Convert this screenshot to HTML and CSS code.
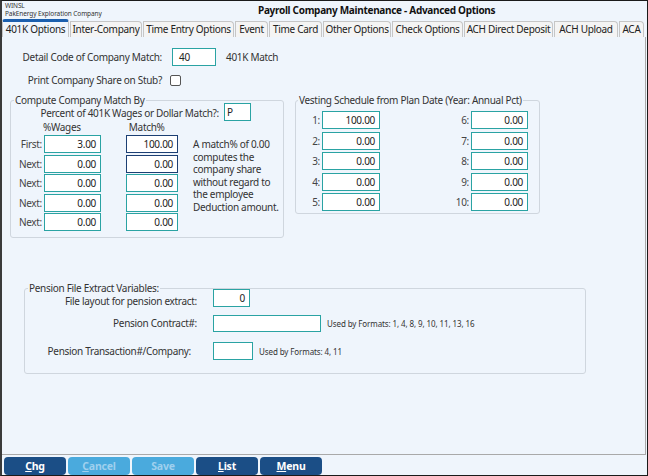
FILE: index.html
```html
<!DOCTYPE html>
<html>
<head>
<meta charset="utf-8">
<link rel="stylesheet" href="styles.css">
</head>
<body>
<div class="window">
  <header class="hdr">
    <div class="co"><div>WINSL</div><div>PakEnergy Exploration Company</div></div>
    <div class="title">Payroll Company Maintenance - Advanced Options</div>
  </header>
  <nav class="tabs">
    <div class="tab active t1">401K Options</div>
    <div class="tab t2">Inter-Company</div>
    <div class="tab t3">Time Entry Options</div>
    <div class="tab t4">Event</div>
    <div class="tab t5">Time Card</div>
    <div class="tab t6">Other Options</div>
    <div class="tab t7">Check Options</div>
    <div class="tab t8">ACH Direct Deposit</div>
    <div class="tab t9">ACH Upload</div>
    <div class="tab t10">ACA</div>
  </nav>
  <main class="content">
    <div class="row r-detail">
      <span class="lbl">Detail Code of Company Match:</span>
      <div class="inp w44 left">40</div>
      <span class="after">401K Match</span>
    </div>
    <div class="row r-print">
      <span class="lbl">Print Company Share on Stub?</span>
      <span class="chk"></span>
    </div>
    <div class="groups">
      <fieldset class="fs match">
        <legend>Compute Company Match By</legend>
        <div class="pct-row">
          <span class="pct-lbl">Percent of 401K Wages or Dollar Match?:</span>
          <div class="inp w27 left">P</div>
        </div>
        <div class="col-heads"><span class="h1">%Wages</span><span class="h2">Match%</span></div>
        <div class="match-grid">
          <span class="rl">First:</span><div class="inp">3.00</div><div class="inp m dark">100.00</div>
          <p class="note">A match% of 0.00<br>computes the<br>company share<br>without regard to<br>the employee<br>Deduction amount.</p>
          <span class="rl">Next:</span><div class="inp">0.00</div><div class="inp m dark">0.00</div>
          <span class="rl">Next:</span><div class="inp">0.00</div><div class="inp m">0.00</div>
          <span class="rl">Next:</span><div class="inp">0.00</div><div class="inp m">0.00</div>
          <span class="rl">Next:</span><div class="inp">0.00</div><div class="inp m">0.00</div>
        </div>
      </fieldset>
      <fieldset class="fs vest">
        <legend>Vesting Schedule from Plan Date (Year: Annual Pct)</legend>
        <div class="vest-grid">
          <span class="vl">1:</span><div class="inp">100.00</div><span class="vl">6:</span><div class="inp">0.00</div>
          <span class="vl">2:</span><div class="inp">0.00</div><span class="vl">7:</span><div class="inp">0.00</div>
          <span class="vl">3:</span><div class="inp">0.00</div><span class="vl">8:</span><div class="inp">0.00</div>
          <span class="vl">4:</span><div class="inp">0.00</div><span class="vl">9:</span><div class="inp">0.00</div>
          <span class="vl">5:</span><div class="inp">0.00</div><span class="vl">10:</span><div class="inp">0.00</div>
        </div>
      </fieldset>
    </div>
    <fieldset class="fs pension">
      <legend>Pension File Extract Variables:</legend>
      <div class="prow p1">
        <span class="plbl">File layout for pension extract:</span>
        <div class="inp w37">0</div>
      </div>
      <div class="prow p2">
        <span class="plbl">Pension Contract#:</span>
        <div class="inp w108"></div>
        <span class="used">Used by Formats: 1, 4, 8, 9, 10, 11, 13, 16</span>
      </div>
      <div class="prow p3">
        <span class="plbl short">Pension Transaction#/Company:</span>
        <div class="inp w40"></div>
        <span class="used">Used by Formats: 4, 11</span>
      </div>
    </fieldset>
  </main>
  <footer class="btns">
    <div class="btn"><u>C</u>hg</div>
    <div class="btn off"><u>C</u>ancel</div>
    <div class="btn off">Save</div>
    <div class="btn"><u>L</u>ist</div>
    <div class="btn"><u>M</u>enu</div>
  </footer>
</div>
</body>
</html>
```
FILE: styles.css
```css
* { box-sizing: border-box; }
html, body { margin: 0; padding: 0; }
body {
  width: 648px;
  height: 476px;
  overflow: hidden;
  font-family: "Noto Sans", "Open Sans", sans-serif;
  font-size: 10px;
  letter-spacing: -0.3px;
  color: #333;
  background: #eff5fc;
}
.window {
  width: 648px;
  height: 476px;
  border: 1px solid #1a1a1a;
  border-left: 2px solid #3a3a3a;
  display: flex;
  flex-direction: column;
  background: #eff5fc;
}
.hdr { height: 18px; display: flex; flex: none; }
.co {
  width: 256px;
  font-size: 6.5px;
  letter-spacing: -0.1px;
  line-height: 8px;
  padding: 1px 0 0 3px;
  color: #333;
}
.title {
  font-weight: bold;
  font-size: 10px;
  letter-spacing: -0.3px;
  line-height: 18px;
  color: #111;
  white-space: nowrap;
}
.tabs { height: 18px; flex: none; display: flex; align-items: flex-end; }
.tab {
  height: 16px;
  border: 1px solid #c6c6c6;
  border-bottom: none;
  border-radius: 0 4px 0 0;
  background: #f4f4f4;
  font-size: 10px;
  letter-spacing: -0.3px;
  line-height: 15px;
  text-align: center;
  color: #222;
  white-space: nowrap;
  overflow: hidden;
  margin-right: 1px;
}
.tab.active {
  height: 18px;
  background: #eff5fc;
  border-top: 3px solid #1b5fae;
  border-radius: 3px 3px 0 0;
  line-height: 15px;
}
.t1 { width: 67px; }
.t2 { width: 72px; }
.t3 { width: 91px; }
.t4 { width: 33px; }
.t5 { width: 53px; }
.t6 { width: 68px; }
.t7 { width: 71px; }
.t8 { width: 89px; }
.t9 { width: 64px; }
.t10 { width: 25px; }

.content {
  flex: 1;
  border-right: 1px solid #a9a9a9;
  border-bottom: 1px solid #a9a9a9;
  margin-right: 1px;
  display: flex;
  flex-direction: column;
  align-items: flex-start;
}
.row { display: flex; align-items: center; }
.lbl { width: 160px; text-align: right; white-space: nowrap; }
.r-detail { margin-top: 11px; height: 18px; }
.r-detail .inp { margin-left: 10px; }
.after { margin-left: 10px; }
.r-print { margin-top: 8px; height: 12px; }
.chk {
  width: 11px; height: 11px;
  border: 1px solid #555;
  border-radius: 2px;
  background: #fff;
  margin-left: 8px;
}

.inp {
  height: 18px;
  border: 1px solid #2aa3a3;
  background: #fff;
  color: #222;
  text-align: right;
  padding: 0 4px;
  line-height: 16px;
  font-size: 10px;
  white-space: nowrap;
}
.inp.left { text-align: left; padding: 0 6px; }
.inp.dark { border-color: #1c3f73; }
.w44 { width: 44px; }
.w27 { width: 27px; padding: 0 2px !important; }
.w37 { width: 37px; }
.w108 { width: 108px; }
.w40 { width: 40px; }

.groups { display: flex; align-items: flex-start; margin-top: 9px; }
.fs {
  margin: 0;
  padding: 0;
  border: 1px solid #cfd6de;
  border-radius: 3px;
  min-width: 0;
}
.fs legend {
  padding: 0 1px;
  margin-left: 3px;
  line-height: 11px;
  font-size: 10px;
  color: #333;
  white-space: nowrap;
}
.vest legend { margin-left: 2px; }
.match { margin-left: 8px; width: 274px; padding-bottom: 6px; }
.pct-row {
  display: flex;
  justify-content: flex-end;
  align-items: center;
  gap: 5px;
  margin-top: -3px;
  padding-right: 32px;
  height: 18px;
}
.pct-lbl { line-height: 10px; padding-top: 2px; }
.col-heads { height: 12px; line-height: 12px; }
.col-heads .h1 { margin-left: 32px; }
.col-heads .h2 { margin-left: 48px; }
.match-grid {
  margin-top: 2px;
  display: grid;
  grid-template-columns: 33px 57px 77px 1fr;
  grid-auto-rows: 18px;
  row-gap: 1.5px;
}
.rl { text-align: right; padding-right: 2px; line-height: 18px; color: #444; }
.inp.m { margin-left: 25px; width: 52px; }
.note {
  grid-column: 4;
  grid-row: 1 / 6;
  margin: 0;
  padding: 3px 0 0 15px;
  line-height: 12.6px;
  color: #333;
  white-space: nowrap;
}

.vest { margin-left: 11px; width: 245px; padding-bottom: 2px; }
.vest-grid {
  margin-top: 5px;
  display: grid;
  grid-template-columns: 24px 58px 87px 57px;
  column-gap: 2px;
  row-gap: 2.5px;
  grid-auto-rows: 18px;
}
.vl { text-align: right; line-height: 18px; color: #444; }

.pension { margin-top: 45px; margin-left: 22px; width: 562px; padding-bottom: 13px; }
.prow { display: flex; align-items: center; height: 18px; }
.plbl { width: 172px; text-align: right; white-space: nowrap; margin-right: 16px; }
.plbl.short { width: 166px; margin-right: 22px; }
.p1 { margin-top: -5px; }
.p1 .plbl { line-height: 10px; padding-top: 5px; }
.p2 { margin-top: 7px; }
.p3 { margin-top: 10px; }
.p2 .inp { height: 17px; }
.used { font-size: 8px; letter-spacing: -0.1px; margin-left: 6px; color: #333; white-space: nowrap; }

.btns { height: 20px; flex: none; display: flex; gap: 2px; padding: 2px 0 0 2px; }
.btn {
  width: 62px;
  height: 18px;
  border-radius: 4px;
  background: #1b4e86;
  color: #fff;
  font-weight: bold;
  font-size: 10.5px;
  letter-spacing: -0.2px;
  line-height: 18px;
  text-align: center;
}
.btn.off { background: #4aaadd; color: #9fd0ee; }
```
